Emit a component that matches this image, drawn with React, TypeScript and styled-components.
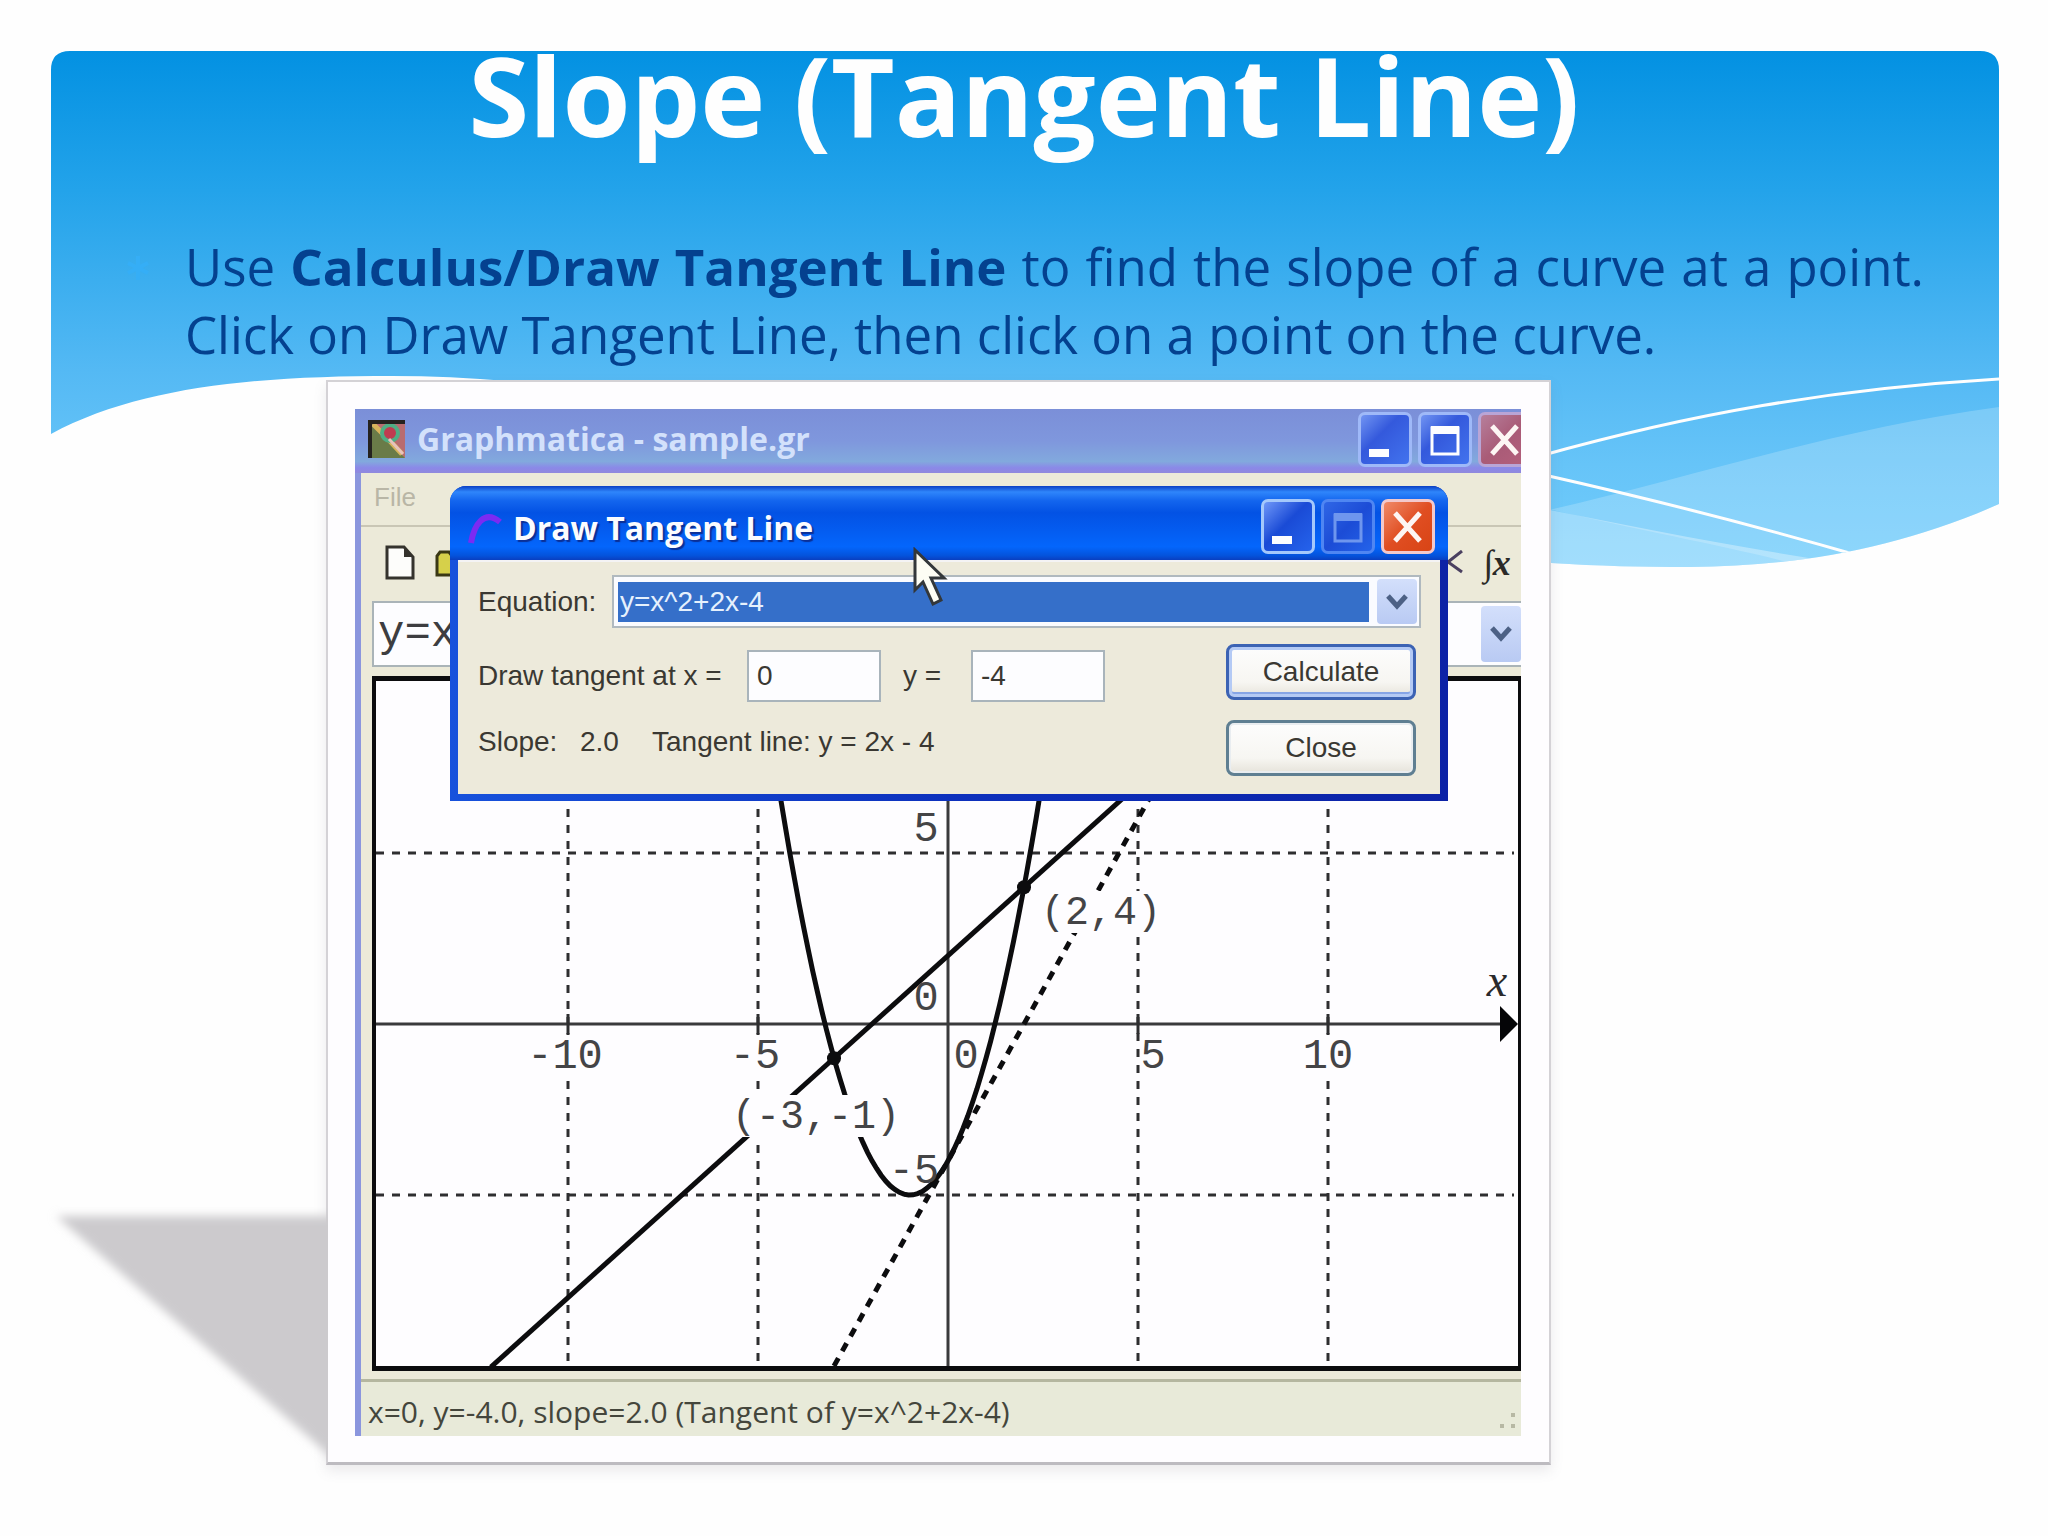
import React from "react";
import styled, { createGlobalStyle, css } from "styled-components";

const GlobalStyle = createGlobalStyle`
  *, *::before, *::after { box-sizing: border-box; }
  body { margin: 0; background: #fefefe; }
`;

const sans = `"Liberation Sans", Arial, sans-serif`;
const display = `"Open Sans", "Noto Sans", sans-serif`;
const mono = `"Liberation Mono", "Courier New", monospace`;

/* ---------- slide ---------- */

const Slide = styled.main`
  position: relative;
  min-height: 100vh;
  padding-bottom: 73px;
  overflow: hidden;
  font-family: ${display};
`;

const Backdrop = styled.svg`
  position: absolute;
  inset: 0 0 auto 0;
  width: 100%;
  height: 600px;
`;

const Content = styled.div`
  position: relative;
`;

const Title = styled.h1`
  margin: 0;
  padding-top: 24px;
  height: 232px;
  font-size: 110px;
  line-height: 140px;
  font-weight: 700;
  text-align: center;
  color: #fefefe;
`;

const Points = styled.ul`
  list-style: none;
  margin: 0;
  padding: 0 124px 0 127px;
`;

const Point = styled.li`
  display: flex;
  gap: 36px;
  height: 148px;
`;

const Bullet = styled.svg`
  flex: none;
  width: 22px;
  height: 68px;
`;

const PointText = styled.p`
  flex: 1;
  margin: 0;
  font-size: 51px;
  line-height: 68px;
  text-align: justify;
  color: #04418f;
`;

const Picture = styled.figure`
  position: relative;
  margin: 0 497px 0 326px;
  padding: 27px 28px 26px 27px;
  background: #fefdff;
  border: 2px solid #d4d2d6;
  border-bottom: 3px solid #bdbbc0;
  box-shadow: 0 6px 12px rgba(120, 110, 125, 0.14);
`;

const CastShadow = styled.svg`
  position: absolute;
  right: 100%;
  bottom: -16px;
  width: 290px;
  height: 280px;
`;

/* ---------- main window ---------- */

const AppWindow = styled.section`
  position: relative;
  border-left: 6px solid #8b96de;
  background: #ecead9;
  font-family: ${sans};
`;

const AppTitleBar = styled.header`
  display: flex;
  align-items: center;
  height: 64px;
  margin-left: -6px;
  padding: 0 0 4px 13px;
  overflow: hidden;
  background: linear-gradient(#7b8fd8 0%, #7f97dd 50%, #82a9dd 82%, #8b88e8 92%, #9089dd 100%);
`;

const AppName = styled.h2`
  flex: 1;
  margin: 0 0 0 12px;
  font-family: ${display};
  font-size: 32px;
  line-height: 44px;
  font-weight: 700;
  white-space: nowrap;
  color: #d3e1fb;
`;

const WindowButtons = styled.div<{ $clipped?: boolean }>`
  display: flex;
  flex: none;
  gap: 6px;
  width: ${(p) => (p.$clipped ? "163px" : "auto")};
`;

const tones = {
  blue: css`background: linear-gradient(135deg, #7194f2, #3459dc 40%, #4273ee); border-color: #9fb9f8;`,
  bright: css`background: linear-gradient(135deg, #6f97f8, #1a4bd6 45%, #2563ec); border-color: #a4c8fb;`,
  muted: css`background: linear-gradient(135deg, #2f66e6, #1c4cd6 50%, #2463ea); border-color: #4f86f2;`,
  red: css`background: linear-gradient(135deg, #f08a68, #e04e22 50%, #d84415); border-color: #f3c9cc;`,
  rose: css`background: linear-gradient(135deg, #b67f9c, #a95b77 50%, #b4607c); border-color: #b9a5d6;`,
};

const CaptionButton = styled.button<{ $tone: keyof typeof tones }>`
  flex: none;
  width: 54px;
  height: 55px;
  padding: 0;
  border: 3px solid;
  border-radius: 7px;
  ${(p) => tones[p.$tone]}
  svg { display: block; width: 100%; height: 100%; }
`;

const MenuBar = styled.nav`
  height: 54px;
  padding: 6px 0 0 13px;
  border-bottom: 2px solid #c9c6b5;
`;

const MenuItem = styled.button`
  padding: 0;
  border: 0;
  background: none;
  font-family: ${sans};
  font-size: 26px;
  line-height: 36px;
  color: #b9b6a6;
`;

const Toolbar = styled.div`
  display: flex;
  justify-content: space-between;
  align-items: flex-start;
  height: 74px;
  padding: 17px 0 0 23px;
`;

const ToolGroup = styled.div`
  display: flex;
  gap: 18px;
`;

const ToolButton = styled.button`
  padding: 0;
  border: 0;
  background: none;
  height: 38px;
  svg { display: block; }
`;

const IntegralTool = styled(ToolButton)`
  width: 38px;
  font-family: "Liberation Serif", "Times New Roman", serif;
  font-style: italic;
  font-weight: 700;
  font-size: 36px;
  line-height: 36px;
  color: #2b2a28;
  text-align: left;
  white-space: nowrap;
`;

const FormulaBar = styled.div`
  display: flex;
  align-items: center;
  height: 66px;
  margin: 0 0 9px 11px;
  border: 2px solid #aab4b8;
  border-right: 0;
  background: #fdfdff;
`;

const FormulaInput = styled.input`
  flex: 1;
  min-width: 0;
  height: 58px;
  padding: 0 4px;
  border: 0;
  background: none;
  font-family: ${mono};
  font-size: 44px;
  line-height: 58px;
  color: #3d3d40;
`;

const DropButton = styled.button<{ $tall?: boolean }>`
  flex: none;
  width: 40px;
  height: ${(p) => (p.$tall ? 56 : 45)}px;
  padding: 0;
  border: 0;
  border-radius: 4px;
  background: linear-gradient(#d3dffb, #b9caf3);
  svg { display: block; margin: auto; }
`;

const GraphFrame = styled.div`
  margin-left: 11px;
  border: solid #0c0c0e;
  border-width: 5px 3px 5px 4px;
  background: #fefdff;
  svg { display: block; width: 100%; height: auto; }
`;

const StatusBar = styled.footer`
  display: flex;
  align-items: flex-end;
  justify-content: space-between;
  margin-top: 8px;
  height: 57px;
  padding: 0 2px 4px 7px;
  border-top: 3px solid #b5b7a0;
  background: #e8ead9;
  font-family: ${display};
  font-size: 30px;
  line-height: 40px;
  color: #44463c;
`;

/* ---------- dialog ---------- */

const Dialog = styled.section`
  position: absolute;
  top: 77px;
  left: 89px;
  right: 73px;
  border-radius: 16px 16px 0 0;
  background: linear-gradient(90deg, #1752dc 0%, #0d31bd 50%, #0c22a6 100%);
  overflow: hidden;
`;

const DialogTitleBar = styled.header`
  display: flex;
  align-items: center;
  height: 74px;
  padding: 6px 13px 0 16px;
  background: linear-gradient(#0a3fc4 0%, #2f86fb 8%, #1365ee 20%, #0352e4 36%, #045cf0 60%, #0466fc 82%, #0453dc 94%, #0a3fc0 100%);
`;

const DialogName = styled.h3`
  flex: 1;
  margin: 0 0 0 11px;
  padding-top: 4px;
  font-family: ${display};
  font-size: 32px;
  line-height: 44px;
  font-weight: 700;
  color: #fbfcff;
  text-shadow: 2px 2px 1px #0b2f96;
`;

const DialogBody = styled.form`
  margin: 0 8px 7px;
  padding: 15px 19px 18px 20px;
  background: #edeadb;
  box-shadow: inset 0 2px 0 #f4f3f4;
  font-family: ${sans};
  font-size: 28px;
  line-height: 40px;
  color: #3a3832;
`;

const Row = styled.div`
  display: flex;
  align-items: center;
`;

const Label = styled.label<{ $width: number }>`
  flex: none;
  width: ${(p) => p.$width}px;
  white-space: nowrap;
`;

const Combo = styled.div`
  display: flex;
  flex: 1;
  align-items: center;
  height: 53px;
  padding: 0 2px 0 4px;
  gap: 8px;
  border: 2px solid #b0b9bf;
  background: #fafbff;
`;

const EquationSelect = styled.select`
  flex: 1;
  height: 40px;
  padding: 0 2px;
  border: 0;
  appearance: none;
  background: #356fc9;
  font-family: ${sans};
  font-size: 28px;
  line-height: 40px;
  color: #e6f1fd;
`;

const Panel = styled.div`
  display: flex;
  justify-content: space-between;
  margin-top: 16px;
  padding-right: 5px;
`;

const Fields = styled.div`
  display: flex;
  flex-direction: column;
  gap: 20px;
  padding-top: 6px;
`;

const NumberBox = styled.input`
  width: 134px;
  height: 52px;
  margin-right: 22px;
  padding: 0 8px;
  border: 2px solid #a9b4bb;
  background: #fdfdff;
  font: inherit;
  color: inherit;
`;

const Result = styled.output<{ $width?: number }>`
  width: ${(p) => (p.$width ? `${p.$width}px` : "auto")};
`;

const Actions = styled.div`
  display: flex;
  flex-direction: column;
  gap: 20px;
`;

const PushButton = styled.button<{ $primary?: boolean }>`
  width: 190px;
  height: 56px;
  padding: 0;
  border: 3px solid ${(p) => (p.$primary ? "#3c63b4" : "#5f7f92")};
  border-radius: 8px;
  background: linear-gradient(#fdfdfd, #f7f6f2 70%, #e6e3da);
  box-shadow: ${(p) => (p.$primary ? "inset 0 0 0 3px #b4caf5, inset 0 -5px 0 #86a5e6" : "inset 0 0 0 2px #e9edf0")};
  font: inherit;
  color: inherit;
`;

const Pointer = styled.svg`
  position: absolute;
  left: 551px;
  top: 138px;
  width: 36px;
  height: 60px;
`;

/* ---------- icons ---------- */

const MinimizeIcon = () => (
  <svg viewBox="0 0 48 49"><rect x="8" y="34" width="20" height="8" fill="#fdfdff" /></svg>
);
const MaximizeIcon = ({ color = "#fdfdff" }: { color?: string }) => (
  <svg viewBox="0 0 48 49">
    <rect x="11" y="13" width="26" height="26" fill="none" stroke={color} strokeWidth="3" />
    <rect x="10" y="11" width="28" height="8" fill={color} />
  </svg>
);
const CloseIcon = () => (
  <svg viewBox="0 0 48 49"><path d="M11 11 36 39M36 11 11 39" stroke="#fdf6f4" strokeWidth="5" /></svg>
);
const Chevron = () => (
  <svg width="24" height="16" viewBox="0 0 24 16"><path d="M3 2 12 12 21 2" fill="none" stroke="#4d6185" strokeWidth="5" /></svg>
);
const AppIcon = () => (
  <svg width="37" height="38" viewBox="0 0 37 38">
    <rect width="37" height="38" fill="#a39a62" />
    <path d="M3 3h34v35z" fill="#b86c70" />
    <path d="M3 3v35h34z" fill="#6a7b48" />
    <path d="M5 4 21 20 34 34" stroke="#d8b45c" strokeWidth="5" />
    <circle cx="22" cy="13" r="8" fill="#c03c50" stroke="#4fae84" strokeWidth="4" />
    <path d="M21 19 35 34" stroke="#e7c3bc" strokeWidth="3" />
    <path d="M2 38V2h35" fill="none" stroke="#25221f" strokeWidth="4" />
  </svg>
);
const CurveIcon = () => (
  <svg width="36" height="38" viewBox="0 0 36 38"><path d="M5 36C8 18 18 2 34 15" fill="none" stroke="#7b2bf2" strokeWidth="6" /></svg>
);
const NewFileIcon = () => (
  <svg width="32" height="38" viewBox="0 0 32 38">
    <path d="M3 3h17l9 10v21H3z" fill="#fdfdfb" stroke="#35332d" strokeWidth="3" />
    <path d="M20 3v10h9z" fill="#35332d" />
  </svg>
);
const FolderIcon = () => (
  <svg width="36" height="38" viewBox="0 0 36 38">
    <path d="M3 31V12l3-4h9l3 4h14v19z" fill="#d6d04a" stroke="#3a3814" strokeWidth="3" />
  </svg>
);
const TraceIcon = () => (
  <svg width="20" height="26" viewBox="0 0 20 26"><path d="M17 1 3 12 17 22" fill="none" stroke="#4a4060" strokeWidth="3" /></svg>
);

/* ---------- graph ---------- */

const UX = 38;
const UY = 34.2;
const OX = 572;
const OY = 343;
const gx = (x: number) => OX + x * UX;
const gy = (y: number) => OY - y * UY;

const parabola = Array.from({ length: 71 }, (_, i) => {
  const x = -5 + i * 0.12;
  return `${gx(x).toFixed(1)},${gy(x * x + 2 * x - 4).toFixed(1)}`;
}).join(" ");

type GraphLabel = { t: string; x: number; y: number; w: number; size: number };

const maskedLabels: GraphLabel[] = [
  { t: "-10", x: 189, y: 387, w: 84, size: 42 },
  { t: "-5", x: 379, y: 387, w: 60, size: 42 },
  { t: "10", x: 952, y: 387, w: 60, size: 42 },
  { t: "(-3,-1)", x: 440, y: 447, w: 166, size: 40 },
  { t: "(2,4)", x: 725, y: 243, w: 124, size: 40 },
];
const plainLabels: { t: string; x: number; y: number }[] = [
  { t: "0", x: 590, y: 387 },
  { t: "5", x: 777, y: 387 },
  { t: "5", x: 550, y: 160 },
  { t: "0", x: 550, y: 329 },
  { t: "-5", x: 538, y: 502 },
];

const Graph = () => (
  <svg viewBox="0 0 1142 685" role="img" aria-label="Graph of a parabola, a line and a tangent line">
    <g stroke="#2e2e30" strokeWidth="3" fill="none">
      {[-10, -5, 5, 10].map((v) => (
        <path key={v} d={`M${gx(v)} 0V685`} strokeDasharray="8 8" />
      ))}
      {[5, -5].map((v) => (
        <path key={v} d={`M0 ${gy(v)}H1138`} strokeDasharray="8 8" />
      ))}
      <path d={`M0 ${OY}H1130M${OX} 0V685`} stroke="#3a3a3c" />
      {[-10, -5, 5, 10].map((v) => (
        <path key={v} d={`M${gx(v)} ${OY - 10}v20`} />
      ))}
    </g>
    <g stroke="#0c0c0e" fill="none">
      <polyline points={parabola} strokeWidth="5" />
      <path d={`M${gx(-12.03)} ${gy(-10.03)}L${gx(8)} ${gy(10)}`} strokeWidth="5" />
      <path d={`M${gx(-3)} ${gy(-10)}L${gx(6)} ${gy(8)}`} strokeWidth="5" strokeDasharray="9 8" />
    </g>
    <circle cx={gx(-3)} cy={gy(-1)} r="7" fill="#0c0c0e" />
    <circle cx={gx(2)} cy={gy(4)} r="7" fill="#0c0c0e" />
    {maskedLabels.map((l) => (
      <rect key={l.t} x={l.x - l.w / 2} y={l.y - 33} width={l.w} height="42" fill="#fefdff" />
    ))}
    <g fontFamily={mono} fontSize="42" fill="#444446" textAnchor="middle">
      {maskedLabels.map((l) => (
        <text key={l.t} x={l.x} y={l.y} fontSize={l.size}>{l.t}</text>
      ))}
      {plainLabels.map((l, i) => (
        <text key={i} x={l.x} y={l.y}>{l.t}</text>
      ))}
    </g>
    <text x="1121" y="315" fontFamily="Liberation Serif, Times New Roman, serif" fontStyle="italic" fontSize="46" fill="#2a2a2c" textAnchor="middle">x</text>
    <path d="M1124 325 1142 343 1124 361z" fill="#050507" />
  </svg>
);

export default function App() {
  return (
    <>
      <GlobalStyle />
      <Slide>
        <Backdrop viewBox="0 0 2048 600" preserveAspectRatio="none" aria-hidden="true">
          <defs>
            <linearGradient id="sky" x1="0" y1="51" x2="0" y2="567" gradientUnits="userSpaceOnUse">
              <stop offset="0" stopColor="#0391e2" />
              <stop offset="0.27" stopColor="#23a3ea" />
              <stop offset="0.62" stopColor="#54b9f4" />
              <stop offset="0.8" stopColor="#66c4f8" />
              <stop offset="1" stopColor="#72cdfc" />
            </linearGradient>
            <clipPath id="band">
              <path d="M51 70Q51 51 70 51H1980Q1999 51 1999 70V504C1900 548 1800 566 1690 567C1640 567 1600 566 1551 563C1200 545 760 376 392 376C260 376 140 386 51 434Z" />
            </clipPath>
          </defs>
          <g clipPath="url(#band)">
            <rect width="2048" height="600" fill="url(#sky)" />
            <path d="M1540 512C1690 478 1830 430 1999 407V600H1900C1800 556 1700 545 1540 507Z" fill="#fff" fillOpacity="0.2" />
            <path d="M1540 508C1640 528 1740 548 1860 566V600H1540Z" fill="#fff" fillOpacity="0.34" />
            <path d="M1540 456C1690 414 1830 389 2000 379" fill="none" stroke="#fefefe" strokeWidth="3" />
            <path d="M1540 474C1660 501 1750 524 1860 556" fill="none" stroke="#fefefe" strokeWidth="3" />
          </g>
        </Backdrop>
        <Content>
          <Title>Slope (Tangent Line)</Title>
          <Points>
            <Point>
              <Bullet viewBox="0 0 22 68" aria-hidden="true">
                <path d="M11 24v24M1 31l20 10M21 31 1 41" stroke="#35aef6" strokeWidth="4" />
              </Bullet>
              <PointText>
                Use <b>Calculus/Draw Tangent Line</b> to find the slope of a curve at a point. Click on
                Draw Tangent Line, then click on a point on the curve.
              </PointText>
            </Point>
          </Points>
          <Picture>
            <CastShadow viewBox="0 0 290 280" aria-hidden="true">
              <defs>
                <filter id="soft" x="-10%" y="-10%" width="120%" height="120%">
                  <feGaussianBlur stdDeviation="5" />
                </filter>
              </defs>
              <path d="M18 18H340V300Z" fill="#cccacd" filter="url(#soft)" />
            </CastShadow>
            <AppWindow>
              <AppTitleBar>
                <AppIcon />
                <AppName>Graphmatica - sample.gr</AppName>
                <WindowButtons $clipped>
                  <CaptionButton $tone="blue" aria-label="Minimize"><MinimizeIcon /></CaptionButton>
                  <CaptionButton $tone="blue" aria-label="Maximize"><MaximizeIcon /></CaptionButton>
                  <CaptionButton $tone="rose" aria-label="Close"><CloseIcon /></CaptionButton>
                </WindowButtons>
              </AppTitleBar>
              <MenuBar>
                <MenuItem>File</MenuItem>
              </MenuBar>
              <Toolbar>
                <ToolGroup>
                  <ToolButton aria-label="New"><NewFileIcon /></ToolButton>
                  <ToolButton aria-label="Open"><FolderIcon /></ToolButton>
                </ToolGroup>
                <ToolGroup>
                  <ToolButton aria-label="Trace"><TraceIcon /></ToolButton>
                  <IntegralTool>∫x</IntegralTool>
                </ToolGroup>
              </Toolbar>
              <FormulaBar>
                <FormulaInput aria-label="Formula" defaultValue="y=x" />
                <DropButton $tall aria-label="Formula history"><Chevron /></DropButton>
              </FormulaBar>
              <GraphFrame>
                <Graph />
              </GraphFrame>
              <StatusBar>
                <span>x=0, y=-4.0, slope=2.0 (Tangent of y=x^2+2x-4)</span>
                <svg width="20" height="20" viewBox="0 0 20 20" aria-hidden="true">
                  <path d="M12 1h4v4h-4zM1 12h4v4H1zM12 12h4v4h-4z" fill="#b7b8a4" />
                </svg>
              </StatusBar>

              <Dialog aria-label="Draw Tangent Line">
                <DialogTitleBar>
                  <CurveIcon />
                  <DialogName>Draw Tangent Line</DialogName>
                  <WindowButtons>
                    <CaptionButton $tone="bright" aria-label="Minimize dialog"><MinimizeIcon /></CaptionButton>
                    <CaptionButton $tone="muted" aria-label="Maximize dialog"><MaximizeIcon color="#6e96ee" /></CaptionButton>
                    <CaptionButton $tone="red" aria-label="Close dialog"><CloseIcon /></CaptionButton>
                  </WindowButtons>
                </DialogTitleBar>
                <DialogBody onSubmit={(e) => e.preventDefault()}>
                  <Row>
                    <Label $width={134} htmlFor="equation">Equation:</Label>
                    <Combo>
                      <EquationSelect id="equation">
                        <option>y=x^2+2x-4</option>
                      </EquationSelect>
                      <DropButton type="button" aria-label="Show equations"><Chevron /></DropButton>
                    </Combo>
                  </Row>
                  <Panel>
                    <Fields>
                      <Row>
                        <Label $width={269} htmlFor="atx">Draw tangent at x =</Label>
                        <NumberBox id="atx" defaultValue="0" />
                        <Label $width={68} htmlFor="aty">y =</Label>
                        <NumberBox id="aty" defaultValue="-4" />
                      </Row>
                      <Row>
                        <Label $width={102} htmlFor="slope">Slope:</Label>
                        <Result id="slope" $width={72}>2.0</Result>
                        <Result>Tangent line: y = 2x - 4</Result>
                      </Row>
                    </Fields>
                    <Actions>
                      <PushButton $primary>Calculate</PushButton>
                      <PushButton type="button">Close</PushButton>
                    </Actions>
                  </Panel>
                </DialogBody>
              </Dialog>
              <Pointer viewBox="0 0 36 60" aria-hidden="true">
                <path d="M3 3V43L11 35 21 57 29 53 19 31H32Z" fill="#fdfdf4" stroke="#33373a" strokeWidth="3" />
              </Pointer>
            </AppWindow>
          </Picture>
        </Content>
      </Slide>
    </>
  );
}
